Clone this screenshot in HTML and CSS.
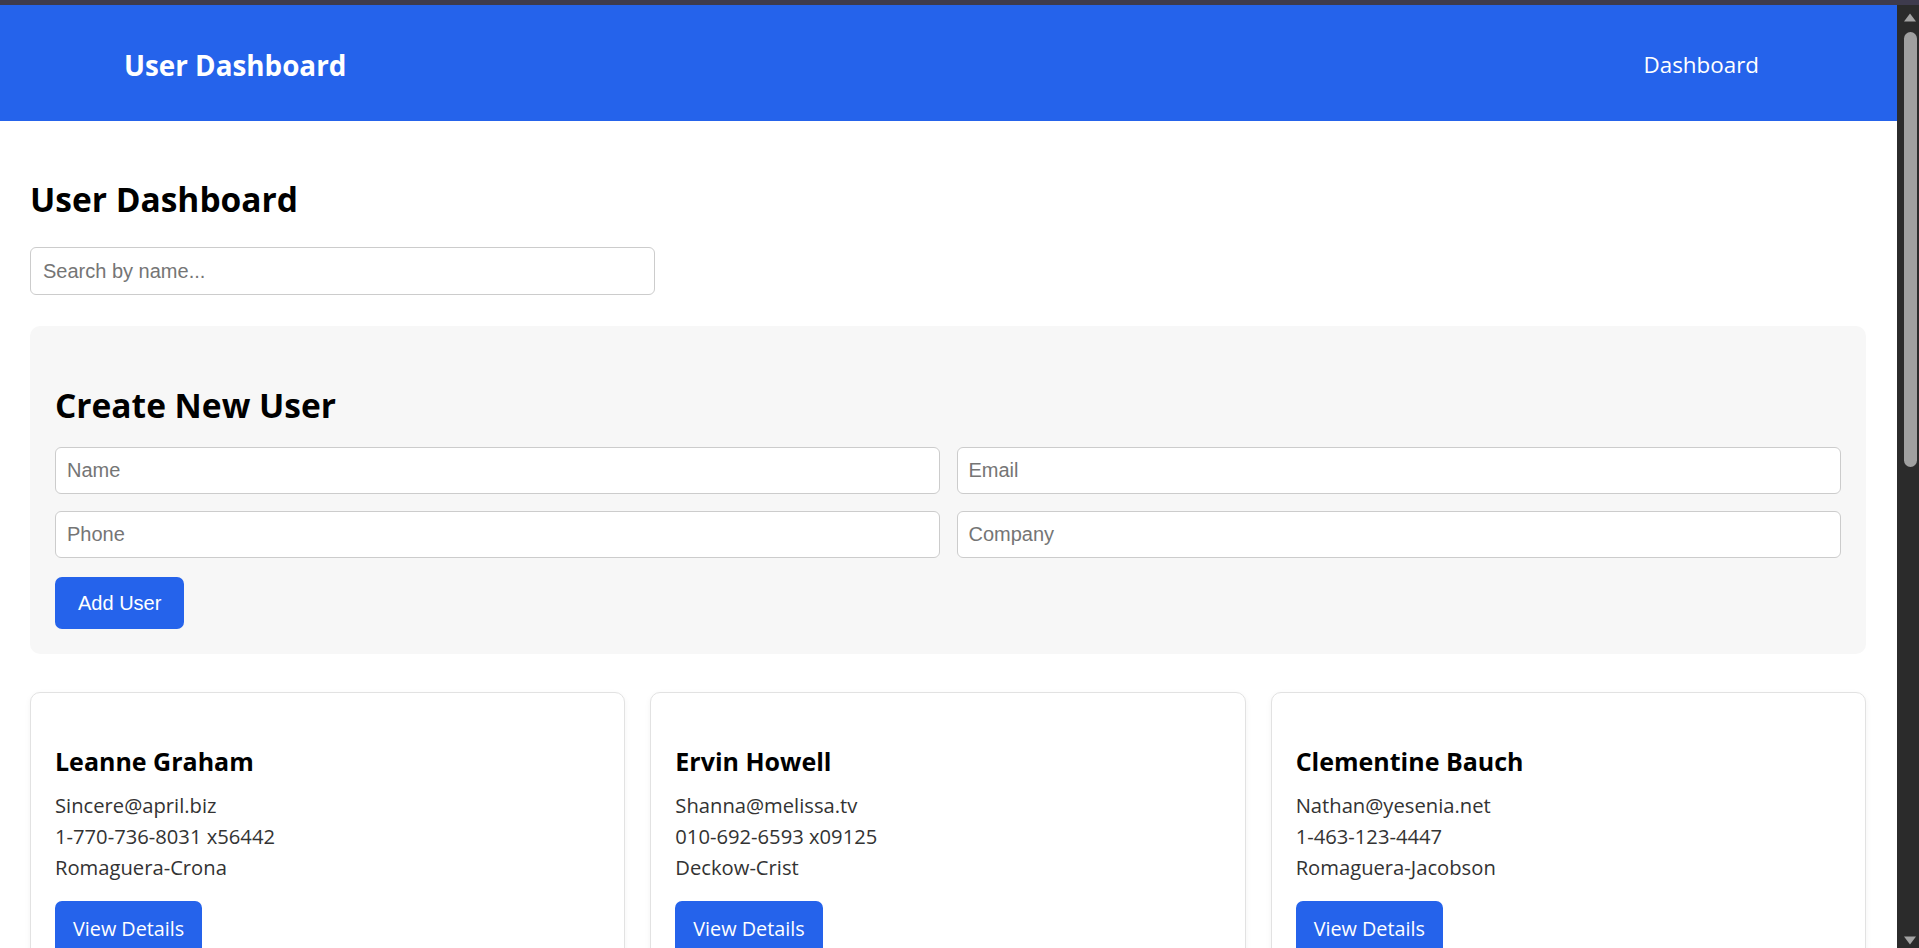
FILE: index.html
```html
<!DOCTYPE html>
<html lang="en">
<head>
<meta charset="utf-8">
<title>User Dashboard</title>
<link rel="stylesheet" href="styles.css">
</head>
<body>
<div class="topstrip"></div>
<div class="frame">
  <div class="page">
    <header class="navbar">
      <div class="brand">User Dashboard</div>
      <nav class="nav"><a class="nav-link" href="#">Dashboard</a></nav>
    </header>
    <main class="container">
      <h1 class="page-title">User Dashboard</h1>
      <input class="search" type="text" placeholder="Search by name...">
      <section class="panel">
        <h2 class="panel-title">Create New User</h2>
        <div class="form-grid">
          <input class="field" type="text" placeholder="Name">
          <input class="field" type="text" placeholder="Email">
          <input class="field" type="text" placeholder="Phone">
          <input class="field" type="text" placeholder="Company">
        </div>
        <button class="btn-add">Add User</button>
      </section>
      <section class="cards">
        <article class="card">
          <h3 class="card-name">Leanne Graham</h3>
          <p class="card-line">Sincere@april.biz</p>
          <p class="card-line">1-770-736-8031 x56442</p>
          <p class="card-line">Romaguera-Crona</p>
          <button class="btn-view">View Details</button>
        </article>
        <article class="card">
          <h3 class="card-name">Ervin Howell</h3>
          <p class="card-line">Shanna@melissa.tv</p>
          <p class="card-line">010-692-6593 x09125</p>
          <p class="card-line">Deckow-Crist</p>
          <button class="btn-view">View Details</button>
        </article>
        <article class="card">
          <h3 class="card-name">Clementine Bauch</h3>
          <p class="card-line">Nathan@yesenia.net</p>
          <p class="card-line">1-463-123-4447</p>
          <p class="card-line">Romaguera-Jacobson</p>
          <button class="btn-view">View Details</button>
        </article>
      </section>
    </main>
  </div>
  <div class="scrollbar">
    <svg class="sb-arrow" width="14" height="10" viewBox="0 0 14 10"><path d="M1 9.5 L7 1.5 L13 9.5 Z" fill="#a3a3a3"/></svg>
    <div class="sb-thumb"></div>
    <div class="sb-spacer"></div>
    <svg class="sb-arrow" width="14" height="10" viewBox="0 0 14 10"><path d="M1 0.5 L7 8.5 L13 0.5 Z" fill="#a3a3a3"/></svg>
  </div>
</div>
</body>
</html>
```

FILE: styles.css
```css
* { box-sizing: border-box; }

html, body {
  margin: 0;
  padding: 0;
  height: 948px;
  overflow: hidden;
  background: #ffffff;
  font-family: "Open Sans", "Noto Sans", sans-serif;
}

.topstrip {
  height: 5px;
  background: #3e3b4d;
}

.frame {
  display: flex;
  height: 943px;
}

.page {
  flex: 1;
  min-width: 0;
  overflow: hidden;
  background: #ffffff;
}

.navbar {
  height: 116px;
  background: #2563eb;
  display: flex;
  align-items: center;
  justify-content: space-between;
  padding: 5px 138px 0 124px;
  color: #ffffff;
}

.brand {
  font-weight: 700;
  font-size: 27.8px;
  line-height: 1;
}

.nav-link {
  color: #ffffff;
  text-decoration: none;
  font-size: 22.4px;
  line-height: 1;
}

.container {
  padding: 0 31px 0 30px;
}

.page-title {
  margin: 55px 0 0;
  font-size: 33.5px;
  font-weight: 700;
  line-height: normal;
  color: #000000;
}

.search {
  display: block;
  margin-top: 25px;
  width: 625px;
  height: 48px;
  padding: 0 12px;
  border: 1px solid #cccccc;
  border-radius: 6px;
  font-family: "Liberation Sans", Arial, sans-serif;
  font-size: 20px;
  color: #222;
  background: #fff;
  outline: none;
}

.search::placeholder,
.field::placeholder {
  color: #757575;
}

.panel {
  margin-top: 31px;
  background: #f7f7f7;
  border-radius: 10px;
  padding: 25px 25px 25px;
}

.panel-title {
  margin: 31px 0 19px;
  font-size: 33.5px;
  font-weight: 700;
  line-height: normal;
  color: #000000;
}

.form-grid {
  display: grid;
  grid-template-columns: 1fr 1fr;
  gap: 17px 17px;
}

.field {
  height: 47px;
  padding: 0 11px;
  border: 1px solid #cccccc;
  border-radius: 6px;
  font-family: "Liberation Sans", Arial, sans-serif;
  font-size: 20px;
  background: #fff;
  outline: none;
}

.btn-add {
  display: block;
  margin-top: 19px;
  height: 52px;
  padding: 0 23px;
  border: none;
  border-radius: 7px;
  background: #2563eb;
  color: #ffffff;
  font-family: "Liberation Sans", Arial, sans-serif;
  font-size: 20px;
}

.cards {
  margin-top: 38px;
  display: grid;
  grid-template-columns: repeat(3, 1fr);
  gap: 25px;
}

.card {
  border: 1px solid #e2e2e2;
  border-radius: 10px;
  padding: 25px 25px 25px 24px;
  background: #fff;
  box-shadow: 0 2px 6px rgba(0, 0, 0, 0.05);
}

.card-name {
  margin: 26px 0 12px;
  font-size: 25px;
  font-weight: 700;
  line-height: normal;
  color: #000;
}

.card-line {
  margin: 0;
  font-size: 20.2px;
  line-height: 31px;
  color: #333333;
}

.btn-view {
  display: block;
  margin-top: 18px;
  height: 54px;
  padding: 0 18px;
  border: none;
  border-radius: 7px;
  background: #2563eb;
  color: #ffffff;
  font-family: "Open Sans", "Noto Sans", sans-serif;
  font-size: 19.8px;
}

.scrollbar {
  width: 22px;
  flex: none;
  background: #2b2b2b;
  display: flex;
  flex-direction: column;
  align-items: center;
  padding: 7px 0 2px 4px;
}

.sb-arrow {
  display: block;
  flex: none;
}

.sb-thumb {
  margin-top: 10px;
  width: 13px;
  height: 435px;
  border-radius: 7px;
  background: #a0a0a0;
  flex: none;
}

.sb-spacer {
  flex: 1;
}
```
